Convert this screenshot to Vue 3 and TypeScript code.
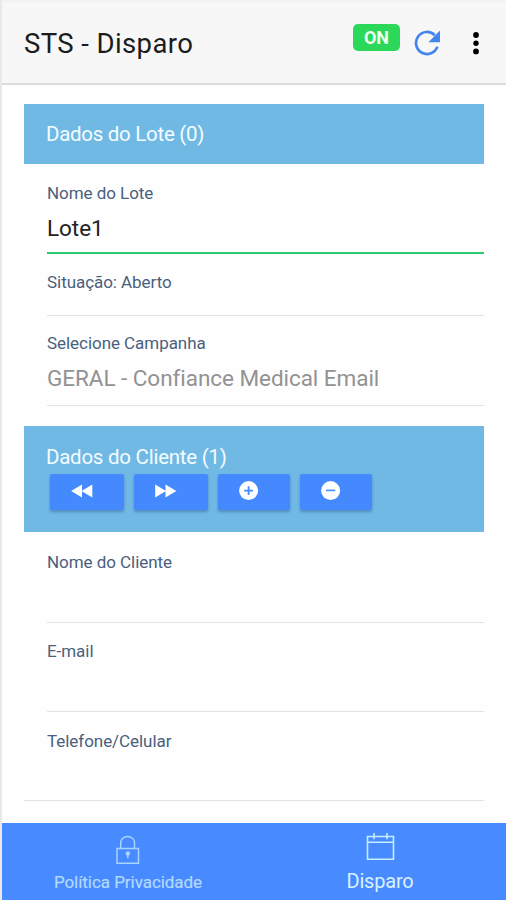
<script setup lang="ts">
import { ref } from 'vue'

interface ClientField {
  key: string
  label: string
  value: string
}

const lotName = ref('Lote1')
const status = ref('Aberto')
const campaign = ref('GERAL - Confiance Medical Email')
const clientFields = ref<ClientField[]>([
  { key: 'name', label: 'Nome do Cliente', value: '' },
  { key: 'email', label: 'E-mail', value: '' },
  { key: 'phone', label: 'Telefone/Celular', value: '' },
])
</script>

<template>
  <div class="app">
    <header class="toolbar">
      <h1 class="title">STS - Disparo</h1>
      <span class="badge">ON</span>
      <button class="tool refresh" aria-label="Atualizar">
        <svg width="28" height="28" viewBox="0 0 28 28">
          <path d="M23.4 17.6A11 11 0 1 1 20.8 6.2" fill="none" stroke="#4485ee" stroke-width="2.7" />
          <path d="M26 1.4v11.8H14.4z" fill="#4485ee" />
        </svg>
      </button>
      <button class="tool more" aria-label="Mais">
        <svg width="8" height="24" viewBox="0 0 8 24">
          <circle cx="4" cy="4" r="2.9" />
          <circle cx="4" cy="12.2" r="2.7" />
          <circle cx="4" cy="20.4" r="2.9" />
        </svg>
      </button>
    </header>

    <main class="content">
      <section>
        <div class="divider"><span class="divider-text lot">Dados do Lote (0)</span></div>
        <div class="item active">
          <div class="label">Nome do Lote</div>
          <div class="value">{{ lotName }}</div>
        </div>
        <div class="item status">
          <div class="label">Situação: {{ status }}</div>
        </div>
        <div class="item select">
          <div class="label">Selecione Campanha</div>
          <div class="value muted">{{ campaign }}</div>
        </div>
      </section>

      <section class="client">
        <div class="divider tall">
          <span class="divider-text">Dados do Cliente (1)</span>
          <div class="buttons">
            <button class="btn wide" aria-label="Anterior">
              <svg width="22" height="14" viewBox="0 0 22 14"><path d="M11 .5v13L.2 7zM21.3 .5v13L10.5 7z" fill="#fff" /></svg>
            </button>
            <button class="btn wide" aria-label="Próximo">
              <svg width="22" height="14" viewBox="0 0 22 14"><path d="M.2 .5v13L11 7zM10.5 .5v13L21.3 7z" fill="#fff" /></svg>
            </button>
            <button class="btn" aria-label="Adicionar">
              <svg width="20" height="20" viewBox="0 0 20 20">
                <circle cx="9.6" cy="9.6" r="9.5" fill="#fff" />
                <path d="M5.2 9.6h8.8M9.6 5.2v8.8" stroke="#488aff" stroke-width="1.8" />
              </svg>
            </button>
            <button class="btn" aria-label="Remover">
              <svg width="20" height="20" viewBox="0 0 20 20">
                <circle cx="9.6" cy="9.6" r="9.5" fill="#fff" />
                <path d="M5 9.4h9.2" stroke="#488aff" stroke-width="1.6" />
              </svg>
            </button>
          </div>
        </div>
        <div v-for="field in clientFields" :key="field.key" class="item" :class="field.key">
          <div class="label">{{ field.label }}</div>
          <div class="value">{{ field.value }}</div>
        </div>
      </section>
    </main>

    <nav class="tabs">
      <a class="tab">
        <svg width="24" height="30" viewBox="0 0 24 30" fill="none" stroke="#a6d4ff" stroke-width="1.5">
          <path d="M1 13.5h21.5v14.7H1zM4.7 13.5V7.5a6.9 6 0 0 1 13.8 0v6" />
          <circle cx="11.8" cy="18.6" r="1.5" fill="#a6d4ff" />
          <path d="M11.8 19v4.2" />
        </svg>
        <span class="tab-text privacy">Política Privacidade</span>
      </a>
      <a class="tab selected">
        <svg width="30" height="30" viewBox="0 0 30 30" fill="none" stroke="#c6edff" stroke-width="1.6">
          <path d="M2.5 4.5h26v22.7h-26zM2.5 10.2h26M9 1v6.2M22 1v6.2" />
        </svg>
        <span class="tab-text">Disparo</span>
      </a>
    </nav>
  </div>
</template>

<style>
body {
  margin: 0;
  background: #fefefe;
}
</style>

<style scoped>
.app {
  box-sizing: border-box;
  width: 506px;
  height: 900px;
  border-left: 2px solid #e9e9eb;
  display: flex;
  flex-direction: column;
  overflow: hidden;
  background: #fefefe;
  font-family: Roboto, "Liberation Sans", sans-serif;
}
button {
  border: 0;
  padding: 0;
  background: none;
}
svg {
  display: block;
}
.toolbar {
  box-sizing: border-box;
  flex: none;
  height: 85px;
  padding: 0 26px 0 22px;
  display: flex;
  align-items: flex-start;
  background: #f7f7f7;
  border-top: 2px solid #f2f2f2;
  border-bottom: 2px solid #dcdcdc;
}
.title {
  flex: 1;
  margin: 26px 0 0;
  font-size: 27.5px;
  font-weight: 400;
  letter-spacing: 0.4px;
  line-height: 32px;
  color: #1c1c1c;
  white-space: nowrap;
}
.badge {
  width: 47px;
  height: 27px;
  margin-top: 22px;
  border-radius: 5px;
  background: #2bd85a;
  color: #effff0;
  font-size: 18px;
  font-weight: 700;
  line-height: 27px;
  text-align: center;
}
.refresh {
  margin: 27px 0 0 14px;
}
.more {
  margin: 29px 0 0 30px;
}
.content {
  flex: 1;
  padding: 19px 22px 0;
}
.divider {
  box-sizing: border-box;
  height: 60px;
  padding: 17px 22px 0;
  background: #71b9e5;
}
.divider-text {
  display: inline-block;
  font-size: 20.5px;
  letter-spacing: -0.25px;
  line-height: 26px;
  color: #f4fcff;
  white-space: nowrap;
}
.lot {
  letter-spacing: -0.28px;
}
.client {
  margin-top: 20px;
}
.tall {
  height: 106px;
  padding-top: 18px;
}
.buttons {
  display: flex;
  gap: 10px;
  margin: 4px 0 0 4px;
}
.btn {
  display: flex;
  align-items: center;
  width: 72px;
  height: 36px;
  padding: 0 0 2px 21px;
  border-radius: 2px;
  background: #4589ff;
  box-shadow: 0 2px 3px rgba(30, 70, 130, 0.4);
}
.btn.wide {
  width: 74px;
}
.item {
  box-sizing: border-box;
  height: 89px;
  margin-left: 23px;
  padding-top: 18px;
  border-bottom: 1px solid #e2e3e5;
}
.active {
  height: 90px;
  padding-top: 19px;
  border-bottom: 2px solid #2ccb6e;
}
.status {
  height: 62px;
}
.select {
  height: 90px;
  padding-top: 17px;
}
.name {
  height: 91px;
  padding-top: 20px;
}
.phone {
  margin-left: 0;
  padding-left: 23px;
  padding-top: 19px;
}
.label {
  font-size: 17px;
  letter-spacing: -0.05px;
  line-height: 20px;
  color: #4a5f7d;
  white-space: nowrap;
}
.value {
  margin-top: 12px;
  font-size: 22.5px;
  letter-spacing: -0.05px;
  line-height: 26px;
  color: #222;
  white-space: nowrap;
}
.muted {
  color: #929292;
}
.tabs {
  flex: none;
  height: 77px;
  display: flex;
  background: #488aff;
}
.tab {
  flex: 1;
  display: flex;
  flex-direction: column;
  align-items: center;
  padding-top: 12px;
  color: #b3d9ff;
  font-size: 17px;
}
.tab-text {
  margin-top: 6px;
  line-height: 22px;
  white-space: nowrap;
}
.selected {
  padding-top: 9px;
  color: #d8f3ff;
  font-size: 20px;
}
.selected .tab-text {
  margin-top: 8px;
  letter-spacing: -0.2px;
}
.privacy {
  letter-spacing: -0.05px;
  -webkit-text-stroke: 0.2px currentColor;
}
</style>
